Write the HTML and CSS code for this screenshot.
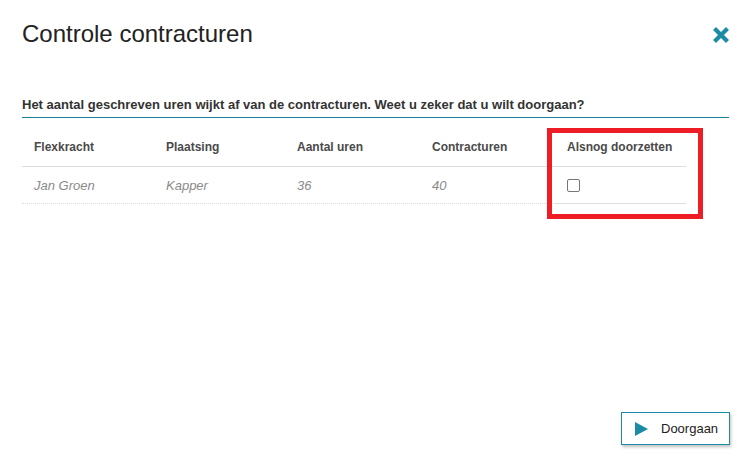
FILE: index.html
```html
<!DOCTYPE html>
<html lang="nl">
<head>
    <meta charset="UTF-8">
    <meta name="viewport" content="width=device-width, initial-scale=1.0">
    <title>Controle contracturen</title>
    <link rel="stylesheet" href="styles.css">
</head>
<body>
    <div class="dialog">
        <div class="dialog-header">
            <h2>Controle contracturen</h2>
            <button class="close-btn" aria-label="Sluiten">
                <svg width="16" height="16" viewBox="0 0 16 16">
                    <path d="M3 3 L13 13 M13 3 L3 13" stroke="#1b8ba6" stroke-width="4.2" stroke-linecap="square"/>
                </svg>
            </button>
        </div>

        <p class="message">Het aantal geschreven uren wijkt af van de contracturen. Weet u zeker dat u wilt doorgaan?</p>

        <div class="table-wrap">
            <table class="check-table">
                <colgroup>
                    <col style="width: 132px">
                    <col style="width: 131px">
                    <col style="width: 135px">
                    <col style="width: 135px">
                    <col style="width: 131px">
                </colgroup>
                <thead>
                    <tr>
                        <th>Flexkracht</th>
                        <th>Plaatsing</th>
                        <th>Aantal uren</th>
                        <th>Contracturen</th>
                        <th class="col-confirm">Alsnog doorzetten</th>
                    </tr>
                </thead>
                <tbody>
                    <tr>
                        <td>Jan Groen</td>
                        <td>Kapper</td>
                        <td>36</td>
                        <td>40</td>
                        <td class="col-confirm"><span class="checkbox"></span></td>
                    </tr>
                </tbody>
            </table>
            <div class="highlight"></div>
        </div>

        <div class="dialog-footer">
            <button class="btn-continue">
                <svg width="13" height="14" viewBox="0 0 13 14">
                    <polygon points="0,0 13,7 0,14" fill="#1b8ba6"/>
                </svg>
                <span>Doorgaan</span>
            </button>
        </div>
    </div>
</body>
</html>
```

FILE: styles.css
```css
* {
    box-sizing: border-box;
}
body {
    margin: 0;
    background-color: #fff;
    font-family: 'Liberation Sans', Arial, sans-serif;
    color: #222;
}
.dialog {
    display: flex;
    flex-direction: column;
    height: 100vh;
    padding: 20px 22px 14px 22px;
}
.dialog-header {
    display: flex;
    justify-content: space-between;
    align-items: center;
}
.dialog-header h2 {
    margin: 0;
    font-size: 24px;
    font-weight: 400;
    line-height: 28px;
    color: #222;
}
.close-btn {
    border: 0;
    background: none;
    padding: 0;
    width: 16px;
    height: 16px;
    margin-top: 1px;
    cursor: pointer;
}
.close-btn svg {
    display: block;
}
.message {
    margin: 49px 0 0 0;
    padding-bottom: 5px;
    font-size: 13px;
    font-weight: 700;
    line-height: 15px;
    color: #333;
    border-bottom: 1px solid #1b7f98;
}
.table-wrap {
    position: relative;
}
.check-table {
    margin-top: 10px;
    width: 664px;
    table-layout: fixed;
    border-collapse: collapse;
    font-size: 12px;
    line-height: 14px;
}
.check-table th {
    text-align: left;
    font-weight: 700;
    color: #4a4a4a;
    padding: 12px 12px;
    border-bottom: 1px solid #ddd;
}
.check-table td {
    font-size: 13px;
    line-height: 15px;
    font-style: italic;
    color: #8a8a8a;
    padding: 11px 12px 10px 12px;
    border-bottom: 1px dotted #ddd;
}
.check-table td.col-confirm {
    border-bottom: 1px solid #ddd;
}
.checkbox {
    display: block;
    width: 13px;
    height: 13px;
    margin: 1px 0;
    border: 1px solid #767676;
    border-radius: 2px;
    background: #fff;
}
.highlight {
    position: absolute;
    left: 525px;
    top: 10px;
    width: 156px;
    height: 91px;
    border: 5px solid #ee1c25;
    pointer-events: none;
}
.dialog-footer {
    margin-top: auto;
    display: flex;
    justify-content: flex-end;
}
.btn-continue {
    display: flex;
    align-items: center;
    gap: 13px;
    width: 109px;
    height: 33px;
    margin-right: -1px;
    padding: 0 0 0 13px;
    background: #fff;
    border: 1px solid #1b8ba6;
    box-shadow: 1px 2px 3px rgba(0, 0, 0, 0.25);
    font-family: 'Liberation Sans', Arial, sans-serif;
    font-size: 13px;
    color: #222;
    cursor: pointer;
}
.btn-continue svg {
    display: block;
}
```
